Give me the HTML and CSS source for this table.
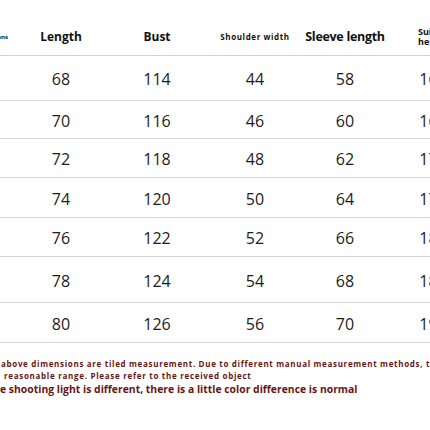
FILE: index.html
```html
<!DOCTYPE html>
<html>
<head>
<meta charset="utf-8">
<link rel="stylesheet" href="styles.css">
</head>
<body>
<div class="page">
  <div class="chart">
    <div class="c h c0"><span class="tiny">Dimensions</span></div>
    <div class="c h">Length</div>
    <div class="c h">Bust</div>
    <div class="c h small">Shoulder width</div>
    <div class="c h sleeve">Sleeve length</div>
    <div class="c h c5"><span class="suit">Suitable height</span></div>

    <div class="c">S</div><div class="c">68</div><div class="c">114</div><div class="c">44</div><div class="c">58</div><div class="c">160</div>
    <div class="c">M</div><div class="c">70</div><div class="c">116</div><div class="c">46</div><div class="c">60</div><div class="c">165</div>
    <div class="c">L</div><div class="c">72</div><div class="c">118</div><div class="c">48</div><div class="c">62</div><div class="c">170</div>
    <div class="c">XL</div><div class="c">74</div><div class="c">120</div><div class="c">50</div><div class="c">64</div><div class="c">175</div>
    <div class="c">2XL</div><div class="c">76</div><div class="c">122</div><div class="c">52</div><div class="c">66</div><div class="c">180</div>
    <div class="c">3XL</div><div class="c">78</div><div class="c">124</div><div class="c">54</div><div class="c">68</div><div class="c">185</div>
    <div class="c">4XL</div><div class="c">80</div><div class="c">126</div><div class="c">56</div><div class="c">70</div><div class="c">190</div>
  </div>
  <div class="notes">
    <p class="n1">above dimensions are tiled measurement. Due to different manual measurement methods, there may be an error</p>
    <p class="n2">reasonable range. Please refer to the received object</p>
    <p class="n3">e shooting light is different, there is a little color difference is normal</p>
  </div>
</div>
</body>
</html>
```
FILE: styles.css
```css
html, body {
  margin: 0;
  padding: 0;
  background: #fff;
}
.page {
  width: 430px;
  height: 430px;
  overflow: hidden;
  font-family: "Open Sans", "Noto Sans", sans-serif;
}
.chart {
  display: grid;
  grid-template-columns: 96px 96px 96px 100px 80px 96px;
  grid-template-rows: 38px 45px 38px 39px 40px 39px 46px 40px;
  margin-left: -83px;
  margin-top: 18px;
  width: 564px;
}
.c {
  display: flex;
  align-items: center;
  justify-content: center;
  border-bottom: 1px solid #d4d4d4;
  box-sizing: border-box;
  font-size: 16px;
  color: #1c1c1c;
  padding-top: 2px;
}
.h {
  font-weight: 700;
  font-size: 12px;
  color: #111;
  padding-top: 0;
}
.c0 {
  justify-content: flex-end;
  padding-right: 5px;
}
.c5 {
  justify-content: flex-start;
  padding-left: 33px;
}
.tiny {
  font-size: 6px;
}
.small {
  font-size: 8px;
  letter-spacing: 0.6px;
}
.sleeve {
  font-size: 12.5px;
  letter-spacing: -0.3px;
}
.suit {
  font-size: 9px;
  line-height: 10px;
  width: 44px;
  text-align: left;
}
.notes {
  margin-top: 15px;
  color: #6a1414;
  font-weight: 700;
  white-space: nowrap;
}
.notes p {
  margin: 0;
}
.n1 {
  font-size: 8px;
  line-height: 12px;
  letter-spacing: 0.68px;
  padding-left: 1px;
}
.n2 {
  font-size: 8px;
  line-height: 12px;
  letter-spacing: 0.7px;
  padding-left: 4px;
}
.n3 {
  font-size: 10.4px;
  line-height: 14px;
}
```
